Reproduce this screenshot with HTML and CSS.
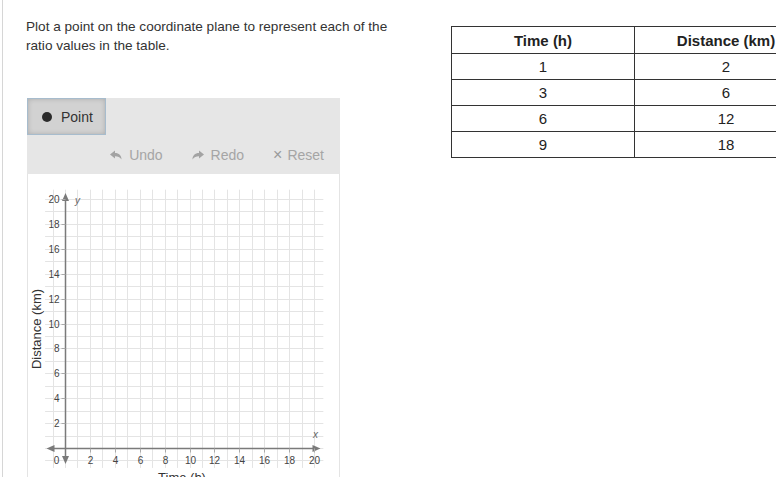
FILE: index.html
```html
<!DOCTYPE html>
<html lang="en">
<head>
<meta charset="UTF-8">
<title>Ratio values on the coordinate plane</title>
<link rel="stylesheet" href="styles.css">
</head>
<body>
<div class="page">
    <!-- question and graphing tool -->
    <div class="question">
        <p class="prompt">Plot a point on the coordinate plane to represent each of the ratio values in the table.</p>

        <div class="grapher">
            <div class="toolbar">
                <div class="tools">
                    <button class="tool active"><span class="dot"></span>Point</button>
                </div>
                <div class="actions">
                    <button class="action">
                        <svg width="12" height="10" viewBox="0 0 12 10"><path d="M0 4.5 L5 0.5 V3 C9 3 11.5 5.5 11.5 9.5 C10 7.2 8 6.2 5 6.2 V8.5 Z" fill="#a3a3a3"/></svg>
                        Undo
                    </button>
                    <button class="action">
                        <svg width="12" height="10" viewBox="0 0 12 10"><path d="M12 4.5 L7 0.5 V3 C3 3 0.5 5.5 0.5 9.5 C2 7.2 4 6.2 7 6.2 V8.5 Z" fill="#a3a3a3"/></svg>
                        Redo
                    </button>
                    <button class="action"><span class="times">&times;</span>Reset</button>
                </div>
            </div>
            <div class="plane-box">
                <svg id="plane" width="311" height="320" viewBox="0 0 311 320">
                    <g id="grid"></g>
                    <g id="axes"></g>
                    <text class="axis-name" x="0" y="0" transform="translate(12.5 155) rotate(-90)" text-anchor="middle">Distance (km)</text>
                    <text class="axis-name" x="154" y="308" text-anchor="middle">Time (h)</text>
                    <text class="axis-letter" x="47" y="30">y</text>
                    <text class="axis-letter" x="285" y="264">x</text>
                </svg>
            </div>
        </div>
    </div>

    <!-- ratio table -->
    <table class="ratios">
        <tr><th>Time (h)</th><th>Distance (km)</th></tr>
        <tr><td>1</td><td>2</td></tr>
        <tr><td>3</td><td>6</td></tr>
        <tr><td>6</td><td>12</td></tr>
        <tr><td>9</td><td>18</td></tr>
    </table>
</div>
<script src="graph.js"></script>
</body>
</html>
```

FILE: styles.css
```css
html, body {
    margin: 0;
    overflow: hidden;
}

body {
    font-family: "Liberation Sans", Arial, sans-serif;
    font-size: 14px;
    color: #333;
    background: #fff;
}

.page {
    display: flex;
    align-items: flex-start;
    margin-left: 2px;
    min-height: 477px;
    padding: 18px 0 0 23px;
    border-left: 1px solid #d6d6d6;
}

.question {
    flex: none;
    width: 425px;
}

.prompt {
    width: 372px;
    margin: 0;
    font-size: 13.6px;
    line-height: 18.5px;
}

.grapher {
    width: 313px;
    margin: 43px 0 0 1px;
}

.toolbar {
    background: #e6e6e6;
}

.tools {
    display: flex;
}

.tool {
    display: flex;
    align-items: center;
    gap: 9px;
    height: 37px;
    padding: 0 12px 0 14px;
    border: 1px solid #a7bccd;
    background: #d2d2d2;
    box-shadow: inset 0 0 5px rgba(0, 0, 0, 0.18);
    font: 14px "Liberation Sans", Arial, sans-serif;
    color: #333;
}

.dot {
    width: 10px;
    height: 10px;
    border-radius: 50%;
    background: #2b2b2b;
}

.actions {
    display: flex;
    justify-content: flex-end;
    align-items: center;
    gap: 29px;
    height: 39px;
    padding-right: 16px;
}

.action {
    display: flex;
    align-items: center;
    gap: 7px;
    padding: 0;
    border: none;
    background: none;
    font: 14px "Liberation Sans", Arial, sans-serif;
    color: #a5a5a5;
}

.times {
    font-size: 16px;
    margin-right: -2px;
    color: #9a9a9a;
}

.plane-box {
    height: 320px;
    background: #fff;
    border-left: 1px solid #e4e4e4;
    border-right: 1px solid #e4e4e4;
}

#plane {
    display: block;
    font-family: "Liberation Sans", Arial, sans-serif;
}

.axis-name {
    font-size: 13px;
    fill: #333;
}

.axis-letter {
    font-size: 10px;
    font-style: italic;
    fill: #666;
}

.tick-label {
    font-size: 10px;
    fill: #444;
}

.ratios {
    flex: none;
    margin-top: 8px;
    border-collapse: collapse;
    font-size: 15px;
}

.ratios th,
.ratios td {
    width: 182px;
    height: 25px;
    padding: 0;
    border: 1px solid #333;
    text-align: center;
    color: #222;
}

.ratios th {
    height: 26px;
    font-weight: bold;
}
```

FILE: graph.js
```js
// draws the grid, axes and tick labels of the coordinate plane
(function () {
    var NS = 'http://www.w3.org/2000/svg';
    var grid = document.getElementById('grid');
    var axes = document.getElementById('axes');

    var ox = 37, oy = 274, unit = 12.45;
    var minX = ox - 1.6 * unit, maxX = ox + 20.75 * unit;
    var minY = oy - 20.75 * unit, maxY = oy + 1.6 * unit;

    function add(parent, tag, attrs, text) {
        var el = document.createElementNS(NS, tag);
        for (var k in attrs) el.setAttribute(k, attrs[k]);
        if (text !== undefined) el.textContent = text;
        parent.appendChild(el);
        return el;
    }

    function px(v) {
        return Math.round(v) + 0.5;
    }

    // grid lines, one per unit
    for (var i = -1; i <= 20; i++) {
        var x = px(ox + i * unit);
        var y = px(oy - i * unit);
        add(grid, 'line', { x1: x, y1: minY, x2: x, y2: maxY, stroke: '#e4e4e4', 'stroke-width': 1 });
        add(grid, 'line', { x1: minX, y1: y, x2: maxX, y2: y, stroke: '#e4e4e4', 'stroke-width': 1 });
    }

    // axes with arrow heads
    var ax = px(ox), ay = px(oy);
    add(axes, 'line', { x1: 22, y1: ay, x2: 289, y2: ay, stroke: '#7a7a7a', 'stroke-width': 1.5 });
    add(axes, 'line', { x1: ax, y1: 23, x2: ax, y2: 286, stroke: '#7a7a7a', 'stroke-width': 1.5 });
    add(axes, 'path', { d: 'M18.5 ' + ay + ' l8 -3.5 v7 z', fill: '#7a7a7a' });
    add(axes, 'path', { d: 'M292.5 ' + ay + ' l-8 -3.5 v7 z', fill: '#7a7a7a' });
    add(axes, 'path', { d: 'M' + ax + ' 19 l-3.5 8 h7 z', fill: '#7a7a7a' });
    add(axes, 'path', { d: 'M' + ax + ' 290 l-3.5 -8 h7 z', fill: '#7a7a7a' });

    // ticks and labels every two units
    for (var n = 2; n <= 20; n += 2) {
        var tx = px(ox + n * unit);
        var ty = px(oy - n * unit);
        add(axes, 'line', { x1: ax - 4, y1: ty, x2: ax, y2: ty, stroke: '#aaa', 'stroke-width': 1 });
        add(axes, 'text', { x: ax - 6, y: ty + 3.5, 'text-anchor': 'end', 'class': 'tick-label' }, n);
        add(axes, 'line', { x1: tx, y1: ay, x2: tx, y2: ay + 4, stroke: '#aaa', 'stroke-width': 1 });
        add(axes, 'text', { x: tx, y: oy + 16, 'text-anchor': 'middle', 'class': 'tick-label' }, n);
    }
    add(axes, 'text', { x: ax - 9, y: oy + 16, 'text-anchor': 'middle', 'class': 'tick-label' }, 0);
})();
```
